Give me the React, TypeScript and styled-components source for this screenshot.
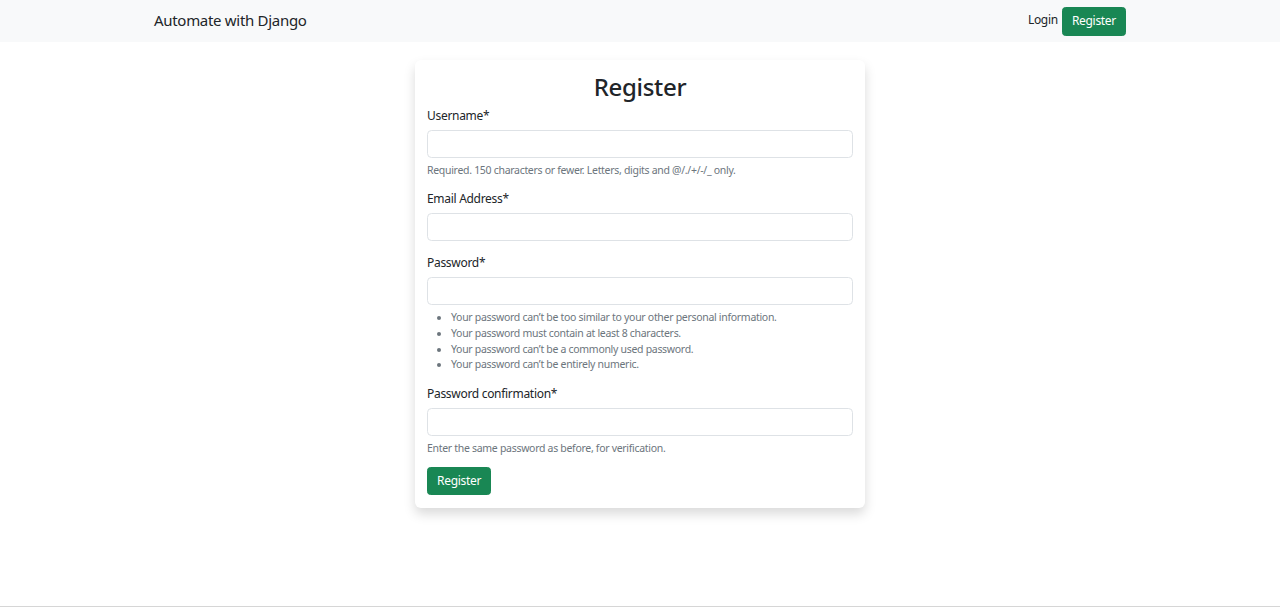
import React from "react";
import styled, { createGlobalStyle } from "styled-components";

const Global = createGlobalStyle`
  * { box-sizing: border-box; }
  html, body { margin: 0; padding: 0; }
  body {
    font-family: "Segoe UI", "Noto Sans", "Open Sans", sans-serif;
    font-size: 12px;
    line-height: 1.5;
    letter-spacing: -0.025em;
    color: #212529;
    background: #fff;
  }
`;

const Page = styled.div`
  min-height: 100vh;
  border-bottom: 1px solid #d6d6d6;
`;

const NavBar = styled.nav`
  background: #f8f9fa;
  height: 42px;
`;

const NavInner = styled.div`
  width: 990px;
  margin: 0 auto;
  padding: 0 9px;
  height: 100%;
  display: flex;
  align-items: center;
  justify-content: space-between;
`;

const Brand = styled.a`
  font-size: 15px;
  color: #212529;
  text-decoration: none;
  line-height: 1.5;
  margin-top: -1px;
`;

const NavLinks = styled.div`
  display: flex;
  align-items: center;
  gap: 4px;
`;

const NavLink = styled.a`
  color: #212529;
  font-size: 12px;
  text-decoration: none;
  margin-top: -2px;
`;

const Button = styled.button<{ $compact?: boolean }>`
  background: #198754;
  color: #fff;
  border: 1px solid #198754;
  border-radius: 3.5px;
  font-family: inherit;
  letter-spacing: inherit;
  font-size: 12px;
  line-height: 18px;
  padding: ${(p) => (p.$compact ? "4px 9px" : "4.5px 9px")};
  cursor: pointer;
`;

const Main = styled.main`
  display: flex;
  justify-content: center;
  padding-top: 18px;
`;

const Card = styled.div`
  width: 450px;
  background: #fff;
  border-radius: 6px;
  box-shadow: 0 6px 12px rgba(0, 0, 0, 0.15);
  padding: 12px 12px 13px;
`;

const Title = styled.h2`
  margin: 0 0 4px;
  font-size: 24px;
  font-weight: 500;
  line-height: 1.2;
  text-align: center;
  padding-top: 1px;
`;

const Field = styled.div`
  margin-bottom: 12px;
`;

const Label = styled.label`
  display: block;
  padding-top: 1px;
  margin-bottom: 5px;
  font-size: 12px;
  line-height: 18px;
`;

const Input = styled.input`
  display: block;
  width: 100%;
  height: 28px;
  border: 1px solid #dee2e6;
  border-radius: 4.5px;
  padding: 4.5px 9px;
  font-family: inherit;
  font-size: 12px;
  background: #fff;
`;

const Help = styled.div`
  margin-top: 5px;
  margin-bottom: -1.5px;
  font-size: 10.5px;
  line-height: 1.5;
  color: #6c757d;
`;

const HelpList = styled.ul`
  margin: 0 0 12px;
  padding-left: 24px;

  li {
    line-height: 15.75px;
  }
`;

const passwordRules = [
  "Your password can\u2019t be too similar to your other personal information.",
  "Your password must contain at least 8 characters.",
  "Your password can\u2019t be a commonly used password.",
  "Your password can\u2019t be entirely numeric.",
];

export default function App() {
  return (
    <Page>
      <Global />
      <NavBar>
        <NavInner>
          <Brand href="#">Automate with Django</Brand>
          <NavLinks>
            <NavLink href="#">Login</NavLink>
            <Button>Register</Button>
          </NavLinks>
        </NavInner>
      </NavBar>
      <Main>
        <Card>
          <Title>Register</Title>
          <Field>
            <Label>Username*</Label>
            <Input type="text" />
            <Help>Required. 150 characters or fewer. Letters, digits and @/./+/-/_ only.</Help>
          </Field>
          <Field>
            <Label>Email Address*</Label>
            <Input type="email" />
          </Field>
          <Field>
            <Label>Password*</Label>
            <Input type="password" />
            <Help>
              <HelpList>
                {passwordRules.map((r) => (
                  <li key={r}>{r}</li>
                ))}
              </HelpList>
            </Help>
          </Field>
          <Field>
            <Label>Password confirmation*</Label>
            <Input type="password" />
            <Help>Enter the same password as before, for verification.</Help>
          </Field>
          <Button $compact>Register</Button>
        </Card>
      </Main>
    </Page>
  );
}
